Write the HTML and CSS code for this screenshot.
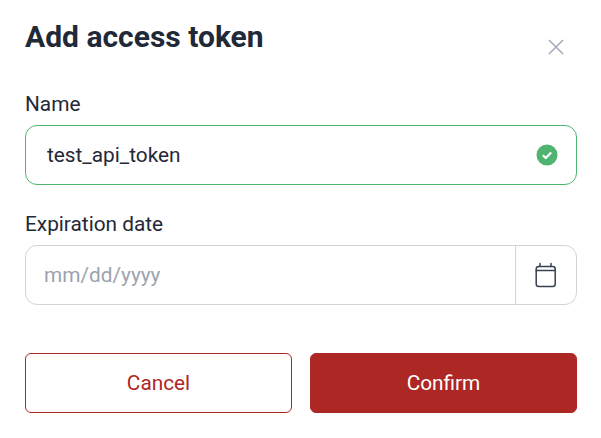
FILE: index.html
```html
<!DOCTYPE html>
<html lang="en">
<head>
  <meta charset="UTF-8">
  <meta name="viewport" content="width=device-width, initial-scale=1.0">
  <title>Add access token</title>
  <link rel="stylesheet" href="styles.css">
</head>
<body>
  <div class="modal">
    <div class="modal-header">
      <h2>Add access token</h2>
      <button class="close-btn" aria-label="Close">
        <svg width="18" height="18" viewBox="0 0 18 18" fill="none" stroke="#a3a8b8" stroke-width="1.5">
          <path d="M2 2L16 16M16 2L2 16"/>
        </svg>
      </button>
    </div>

    <div class="form-group">
      <label for="name">Name</label>
      <div class="field field-valid">
        <input type="text" id="name" value="test_api_token">
        <svg class="check-icon" width="22" height="22" viewBox="0 0 22 22">
          <circle cx="11" cy="11" r="10.5" fill="#50b471"/>
          <path d="M6.8 11.2L9.8 14L15.2 8.4" fill="none" stroke="#fff" stroke-width="2.2"/>
        </svg>
      </div>
    </div>

    <div class="form-group">
      <label for="expiry">Expiration date</label>
      <div class="field">
        <input type="text" id="expiry" class="date-input" placeholder="mm/dd/yyyy">
        <span class="calendar-btn">
          <svg width="22" height="26" viewBox="0 0 22 26" fill="none" stroke="#374151" stroke-width="1.5" stroke-linecap="round">
            <rect x="1.2" y="4.5" width="19" height="20" rx="2.5"/>
            <path d="M1.2 8.5H20.2M5 1.5V4.5M16 1.5V4.5"/>
          </svg>
        </span>
      </div>
    </div>

    <div class="actions">
      <button class="btn btn-cancel">Cancel</button>
      <button class="btn btn-confirm">Confirm</button>
    </div>
  </div>
</body>
</html>
```

FILE: styles.css
```css
* { box-sizing: border-box; margin: 0; padding: 0; }
body { font-family: Roboto, sans-serif; background: #fff; color: #1f2937; }
.modal { padding: 20px 24px 25px 25px; }
.modal-header {
  display: flex;
  justify-content: space-between;
  align-items: flex-start;
  height: 74px;
}
h2 { font-size: 30px; line-height: 34px; font-weight: 700; color: #1f2937; }
.close-btn {
  display: flex;
  margin: 18px 12px 0 0;
  background: none;
  border: none;
  cursor: pointer;
}
.form-group { margin-bottom: 29px; }
label {
  display: block;
  height: 31px;
  font-size: 20.8px;
  line-height: 20px;
  color: #1f2937;
}
.field {
  display: flex;
  align-items: center;
  height: 60px;
  border: 1px solid #d1d5db;
  border-radius: 12px;
}
.field-valid { border-color: #50b471; padding-right: 18px; }
.field input {
  flex: 1;
  min-width: 0;
  height: 100%;
  padding: 0 21px;
  border: none;
  outline: none;
  background: none;
  border-radius: 12px;
  font-family: Roboto, sans-serif;
  font-size: 20.8px;
  color: #1f2937;
}
.field .date-input { padding: 0 18px; }
.date-input::placeholder { color: #9ca3af; opacity: 1; }
.calendar-btn {
  display: flex;
  align-items: center;
  justify-content: center;
  width: 61px;
  height: 100%;
  border-left: 1px solid #d1d5db;
}
.actions { display: flex; gap: 18px; margin-top: 48px; }
.btn {
  flex: 1;
  height: 60px;
  border: 1px solid #ad2724;
  border-radius: 6px;
  font-family: Roboto, sans-serif;
  font-size: 20.8px;
  cursor: pointer;
}
.btn-cancel { background: #fff; color: #ad2724; }
.btn-confirm { background: #ad2724; color: #fff; }
```
